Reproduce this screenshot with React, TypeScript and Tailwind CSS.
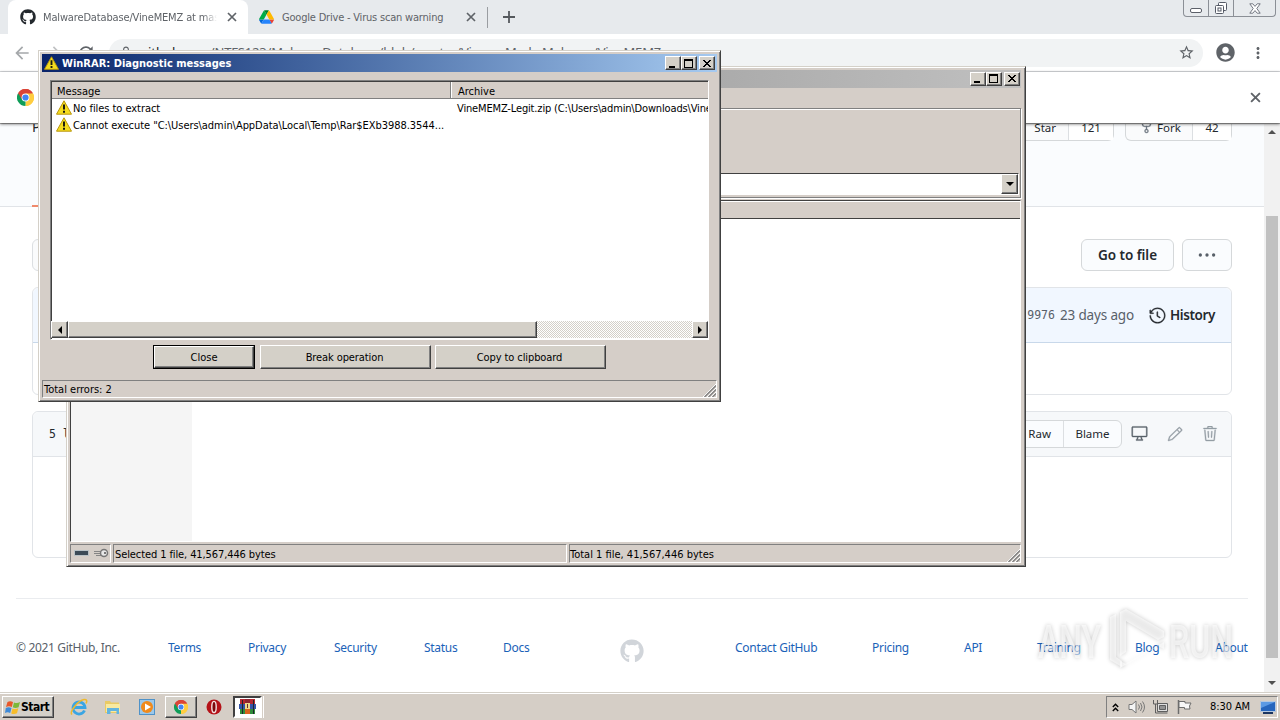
import { clsx } from "clsx";
import React from "react";
import { FaGithub, FaUserCircle } from "react-icons/fa";
import {
  GoDeviceDesktop,
  GoHistory,
  GoKebabHorizontal,
  GoPencil,
  GoRepoForked,
  GoTrash,
} from "react-icons/go";
import { MdArrowBack, MdArrowForward, MdLockOutline, MdMoreVert, MdRefresh, MdStarBorder } from "react-icons/md";

const tahoma = "font-['DejaVu_Sans_Condensed','DejaVu_Sans',sans-serif] font-stretch-condensed";
const segoe = "font-['Noto_Sans',sans-serif]";

const raised =
  "border border-t-white border-l-white border-r-[#404040] border-b-[#404040] bg-[#d4d0c8] shadow-[inset_-1px_-1px_0_#808080]";
const sunken = "border border-t-[#808080] border-l-[#808080] border-r-white border-b-white";
const frame =
  "border border-t-[#d4d0c8] border-l-[#d4d0c8] border-r-[#404040] border-b-[#404040] bg-[#d5cec8] shadow-[inset_1px_1px_0_#ffffff,inset_-1px_-1px_0_#808080]";

const footerLinks = [
  { label: "© 2021 GitHub, Inc.", className: "w-[152px] text-[#586069] tracking-[-0.34px]" },
  { label: "Terms", className: "w-20" },
  { label: "Privacy", className: "w-[86px]" },
  { label: "Security", className: "w-[90px]" },
  { label: "Status", className: "w-[79px]" },
  { label: "Docs", className: "w-[117px]" },
];

const footerLinksRight = [
  { label: "Contact GitHub", className: "w-[137px]" },
  { label: "Pricing", className: "w-[92px]" },
  { label: "API", className: "w-[73px]" },
  { label: "Training", className: "w-[98px]" },
  { label: "Blog", className: "w-20" },
  { label: "About", className: "w-[33px]" },
];

function CloseIcon({ size }: { size: number }) {
  return (
    <svg width={size} height={size} viewBox="0 0 10 10" className="shrink-0">
      <path d="M1 1 9 9M9 1 1 9" stroke="#5f6368" strokeWidth="1.700" />
    </svg>
  );
}

function ChromeLogo({ size }: { size: number }) {
  return (
    <svg width={size} height={size} viewBox="0 0 48 48">
      <path d="M24 24 3.2 12A24 24 0 0 1 44.8 12Z" fill="#db4437" />
      <path d="M24 24 44.8 12A24 24 0 0 1 24 48Z" fill="#ffcd40" />
      <path d="M24 24 24 48A24 24 0 0 1 3.2 12Z" fill="#0f9d58" />
      <path d="M24 13H45.3A24 24 0 0 0 3.2 12L14.5 30Z" fill="#db4437" />
      <path d="M33.5 29.5 24 48A24 24 0 0 0 45.3 13H24Z" fill="#ffcd40" />
      <circle cx="24" cy="24" r="11" fill="#fff" />
      <circle cx="24" cy="24" r="8.8" fill="#4285f4" />
    </svg>
  );
}

function DriveLogo() {
  return (
    <svg width="15" height="14" viewBox="0 0 87 78" className="shrink-0">
      <path d="M6.6 66.9 10.4 73.5c.8 1.4 2 2.5 3.3 3.3L27.5 53H0c0 1.6.4 3.1 1.2 4.5Z" fill="#0066da" />
      <path d="M43.6 25 29.9 1.2c-1.3.8-2.5 1.9-3.3 3.3L1.2 48.5A9 9 0 0 0 0 53h27.5Z" fill="#00ac47" />
      <path d="M73.5 76.8c1.4-.8 2.5-1.9 3.3-3.3l9.3-16c.8-1.4 1.2-2.9 1.2-4.5H59.8l5.8 11.5Z" fill="#ea4335" />
      <path d="M43.6 25 57.4 1.2C56 .4 54.5 0 52.9 0H34.4c-1.6 0-3.2.4-4.5 1.2Z" fill="#00832d" />
      <path d="M59.8 53H27.5L13.7 76.8c1.4.8 2.9 1.2 4.5 1.2h50.8c1.6 0 3.2-.4 4.5-1.2Z" fill="#2684fc" />
      <path d="M73.4 26.5 60.7 4.5c-.8-1.4-1.9-2.5-3.3-3.3L43.6 25l16.2 28h27.4c0-1.6-.4-3.1-1.2-4.5Z" fill="#ffba00" />
    </svg>
  );
}

function WarningIcon({ size }: { size: number }) {
  return (
    <svg width={size} height={size} viewBox="0 0 16 16" className="shrink-0">
      <path d="M8 .8 15.5 14.2H.5Z" fill="#f5dc1e" stroke="#b8960c" strokeWidth="1" strokeLinejoin="round" />
      <path d="M7 4.6h2v5H7zM7 10.700h2v2H7z" fill="#1c1c10" />
    </svg>
  );
}

function CaptionButton({ kind }: { kind: "min" | "max" | "close" }) {
  return (
    <span className={clsx("flex h-[14px] w-4 items-center justify-center", raised)}>
      <svg width="12" height="11" viewBox="0 0 12 11" shapeRendering="crispEdges">
        {kind === "min" && <path d="M2 8h6v2H2z" fill="#000" />}
        {kind === "max" && <path d="M1 1h9v9H1zM2 3v6h7V3z" fill="#000" fillRule="evenodd" />}
        {kind === "close" && (
          <path
            d="M2 2h2v1h1v1h2V3h1V2h2v1H9v1H8v1H7v1h1v1h1v1h1v1H8V8H7V7H5v1H4v1H2V8h1V7h1V6h1V5H4V4H3V3H2z"
            fill="#000"
          />
        )}
      </svg>
    </span>
  );
}

function CaptionButtons() {
  return (
    <div className="flex">
      <CaptionButton kind="min" />
      <CaptionButton kind="max" />
      <span className="w-[2px]" />
      <CaptionButton kind="close" />
    </div>
  );
}

function SizeGrip() {
  return (
    <svg width="13" height="13" viewBox="0 0 13 13" className="self-end">
      <path d="M0 13 13 0M4 13 13 4M8 13 13 8" stroke="#fff" strokeWidth="1" />
      <path d="M1.5 13 13 1.5M5.500 13 13 5.500M9.500 13 13 9.500" stroke="#808080" strokeWidth="1.300" />
    </svg>
  );
}

function TabStrip() {
  return (
    <div className="flex h-[34px] bg-[#e7eaed] pl-2 text-[#5f6368]">
      <div className="flex w-60 items-center rounded-t-lg bg-white pl-3">
        <FaGithub className="h-4 w-4 shrink-0 text-[#24292e]" />
        <span
          className={clsx(
            "mr-[10px] ml-[7px] w-[174px] overflow-hidden pt-[1px] text-[11px] leading-[18px] tracking-[-0.15px] whitespace-nowrap [mask-image:linear-gradient(to_right,black_92%,transparent)]",
            tahoma,
          )}
        >
          MalwareDatabase/VineMEMZ at master
        </span>
        <CloseIcon size={10} />
      </div>
      <div className="flex w-60 items-center border-r border-[#9a9da1] pl-[11px] [border-image:linear-gradient(transparent_8px,#9a9da1_8px,#9a9da1_27px,transparent_27px)_1]">
        <DriveLogo />
        <span
          className={clsx(
            "mr-[2px] ml-2 w-[182px] pt-[1px] text-[11px] leading-[18px] tracking-[-0.2px] whitespace-nowrap",
            tahoma,
          )}
        >
          Google Drive - Virus scan warning
        </span>
        <CloseIcon size={10} />
      </div>
      <svg width="12" height="12" viewBox="0 0 12 12" className="mt-[11px] ml-[15px]">
        <path d="M6 0v12M0 6h12" stroke="#55595d" strokeWidth="1.800" />
      </svg>
      <div className="mr-1 ml-auto flex h-[17px] rounded-b-[4px] border border-t-0 border-[#8b8f96]">
        <span className="flex w-[25px] items-center justify-center border-r border-[#8b8f96]">
          <span className="mt-1 h-[5px] w-3 rounded-[2px] border border-[#5c6069] bg-white" />
        </span>
        <span className="flex w-[25px] items-center justify-center border-r border-[#8b8f96]">
          <svg width="14" height="14" viewBox="0 0 14 14" fill="#fff" stroke="#555a66">
            <rect x="4.500" y="1.500" width="8" height="8" rx="1" />
            <rect x="1.500" y="4.500" width="8" height="8" rx="1" />
            <rect x="4" y="7" width="3" height="3" />
          </svg>
        </span>
        <span className="flex w-[41px] items-center justify-center">
          <svg width="12" height="11" viewBox="0 0 12 11">
            <path
              d="M.8.8h3L6 3.400 8.200.8h3L7.800 5.500 11.200 10.200h-3L6 7.600 3.800 10.200h-3L4.200 5.500Z"
              fill="#fff"
              stroke="#666b76"
              strokeWidth=".9"
            />
          </svg>
        </span>
      </div>
    </div>
  );
}

function Toolbar() {
  return (
    <div className="flex h-[38px] items-center border-b border-[#d9dbde] bg-white text-[#5f6368]">
      <MdArrowBack className="ml-3 h-5 w-5 text-[#a5a8ab]" />
      <MdArrowForward className="ml-3 h-5 w-5 text-[#c0c2c4]" />
      <MdRefresh className="ml-[12px] h-5 w-5" />
      <div className="ml-[13px] flex h-7 w-[1094px] items-center rounded-full bg-[#f1f3f4] pl-[10px]">
        <MdLockOutline className="h-[14px] w-[14px]" />
        <span className="ml-[7px] text-[13px] whitespace-nowrap text-[#5f6368]">
          <span className="text-[#202124]">github.com</span>
          <span className="tracking-[-0.18px]">/NTFS123/MalwareDatabase/blob/master/Viewer-Made Malware/VineMEMZ</span>
        </span>
        <MdStarBorder className="mr-[8px] ml-auto h-[17px] w-[17px]" />
      </div>
      <FaUserCircle className="ml-[13px] h-[19px] w-[19px]" />
      <MdMoreVert className="ml-[14px] h-[18px] w-[18px]" />
    </div>
  );
}

function GitHubPage() {
  return (
    <div className="flex h-[568px] w-[1264px] flex-col overflow-hidden bg-white text-[#24292e]">
      <div className="flex h-[83px] shrink-0 justify-between border-b border-[#e1e4e8] bg-[#fafcfe] px-8">
        <div className="flex h-[83px] w-[60px] flex-col justify-between border-b-2 border-[#f08a6c]">
          <span className="-mt-[8px] text-[14px]">Pu</span>
        </div>
        <div className="flex h-[17px] gap-[11px] text-[11.500px]">
          <div className="flex w-[125px] rounded-b-md border border-t-0 border-[#d5d8da] bg-[#fafbfc]">
            <span className="flex w-[79px] items-end justify-end border-r border-[#dcdfe2] pr-3 leading-[25px]">Star</span>
            <span className="flex flex-1 items-end justify-center bg-white leading-[25px]">121</span>
          </div>
          <div className="flex w-[107px] rounded-b-md border border-t-0 border-[#d5d8da] bg-[#fafbfc]">
            <span className="flex w-[67px] items-end border-r border-[#dcdfe2] pl-[13px] leading-[25px]">
              <GoRepoForked className="mr-[3px] mb-[6px] h-[15px] w-[15px] stroke-current stroke-[0.5] text-[#6a737d]" />
              Fork
            </span>
            <span className="flex flex-1 items-end justify-center bg-white leading-[25px]">42</span>
          </div>
        </div>
      </div>

      <div className="mx-8 mt-8 flex h-8 shrink-0 items-center gap-2 text-[14px] font-semibold">
        <span className="h-8 w-24 rounded-md border border-[#dcdfe2] bg-[#fafbfc]" />
        <span className="ml-auto flex h-8 w-[93px] items-center justify-center rounded-md border border-[#d5d8da] bg-[#fafcfe] text-[13.500px] tracking-[-0.05px]">
          Go to file
        </span>
        <span className="flex h-8 w-[50px] items-center justify-center rounded-md border border-[#d5d8da] bg-[#fafcfe] text-[#586069]">
          <GoKebabHorizontal className="h-5 w-5" />
        </span>
      </div>

      <div className="mx-8 mt-4 h-[108px] shrink-0 rounded-md border border-[#e1e4e8]">
        <div className="flex h-[55px] items-center justify-end rounded-t-md border-b border-[#c8d8ea] bg-[#f1f7ff] pr-4 text-[13.500px]">
          <span className="mr-[5px] pt-[1px] font-['DejaVu_Sans_Mono'] text-[11.500px] text-[#586069]">9976</span>
          <span className="mr-[15px] tracking-[-0.15px] text-[#586069]">23 days ago</span>
          <GoHistory className="mr-1 h-[17px] w-[17px] stroke-current stroke-[0.5]" />
          <span className="w-[45px] font-semibold tracking-[-0.4px]">History</span>
        </div>
      </div>

      <div className="mx-8 mt-4 h-[147px] shrink-0 rounded-md border border-[#e1e4e8]">
        <div className="flex h-[45px] items-center rounded-t-md border-b border-[#e1e4e8] bg-[#f6f8fa] pr-3 pl-4 text-[11.500px]">
          <span className="pt-[2px] font-['DejaVu_Sans_Mono'] text-[11.500px]">5 lines (4 sloc)</span>
          <div className="mr-[9px] ml-auto flex h-7 items-center rounded-md border border-[#d5d8da] bg-[#fafcfe]">
            <span className="px-3">Raw</span>
            <span className="flex h-full w-[58px] items-center justify-center border-l border-[#dcdfe2]">Blame</span>
          </div>
          <div className="flex items-center gap-[19px] pr-[1px] pb-[1px]">
            <GoDeviceDesktop className="h-[17px] w-[17px] stroke-current stroke-[0.5] text-[#586069]" />
            <GoPencil className="h-4 w-4 stroke-current stroke-[0.5] text-[#959da5]" />
            <GoTrash className="h-4 w-4 stroke-current stroke-[0.5] text-[#959da5]" />
          </div>
        </div>
      </div>

      <div className="mx-4 mt-[40px] flex h-[98px] shrink-0 items-center border-t border-[#eaecef] text-[12px] tracking-[-0.29px] whitespace-nowrap text-[#1a62b8]">
        {footerLinks.map((link) => (
          <span key={link.label} className={clsx("shrink-0", link.className)}>
            {link.label}
          </span>
        ))}
        <FaGithub className="mt-[6px] mr-[91px] h-6 w-6 shrink-0 text-[#d1d5da]" />
        {footerLinksRight.map((link) => (
          <span key={link.label} className={clsx("shrink-0", link.className)}>
            {link.label}
          </span>
        ))}
      </div>
    </div>
  );
}

function Browser() {
  return (
    <div className={clsx("h-[692px] bg-white", segoe)}>
      <TabStrip />
      <Toolbar />
      <div className="relative flex h-[51px] items-center justify-between bg-white pr-[19px] pl-[17px] shadow-[0_1px_3px_rgba(0,0,0,0.6)]">
        <ChromeLogo size={17} />
        <CloseIcon size={11} />
      </div>
      <div className="flex border-t border-[#b8b8b8]">
        <GitHubPage />
        <div className="flex w-4 flex-col items-center bg-[#f1f1f1]">
          <span className="mt-[6px] border-x-4 border-b-4 border-x-transparent border-b-[#505050]" />
          <span className="mt-[82px] h-[442px] w-3 bg-[#c1c1c1]" />
          <span className="mt-[23px] border-x-4 border-t-4 border-x-transparent border-t-[#505050]" />
        </div>
      </div>
    </div>
  );
}

function ArchiveWindow() {
  return (
    <div className={clsx("absolute top-[66px] left-[66px] flex h-[501px] w-[960px] flex-col p-[3px] pr-1 text-[11px]", frame)}>
      <div className="flex h-[18px] items-center justify-end bg-linear-to-r from-[#808080] to-[#c0c0c0] pr-[1px]">
        <CaptionButtons />
      </div>
      <div className="mt-5 flex h-[90px] flex-col justify-end border border-[#808080] border-l-white pr-[1px] shadow-[inset_0_1px_0_#ffffff,1px_1px_0_#ffffff]">
        <div className="mb-[2px] flex h-[22px] justify-end border border-t-[#404040] border-r-white border-b-white border-l-[#404040] bg-white">
          <span className={clsx("flex w-[17px] items-center justify-center", raised)}>
            <span className="border-x-4 border-t-4 border-x-transparent border-t-black" />
          </span>
        </div>
      </div>
      <div className="mt-[2px] flex h-[343px] flex-col border border-t-[#404040] border-r-white border-b-white border-l-[#404040] bg-white">
        <div className="h-[18px] border-t border-b border-t-white border-b-[#404040] bg-[#d5cec8]" />
        <div className="w-[121px] flex-1 bg-[#f5f5f5]" />
      </div>
      <div className="mt-[2px] flex h-[19px] shrink-0 gap-[2px] leading-[19px]">
        <div className={clsx("flex w-[41px] items-center gap-1 pl-[3px]", sunken)}>
          <span className="h-[6px] w-[15px] border border-[#b9c2c6] bg-[#3c4b57]" />
          <svg width="16" height="10" viewBox="0 0 16 10" fill="none">
            <path d="M1 3.500h7M1 5.500h7M3 7.500h5" stroke="#858585" />
            <circle cx="11" cy="5" r="3.500" fill="#e8e8e8" stroke="#777" strokeWidth="1.500" />
            <circle cx="12" cy="5" r="1" fill="#555" />
          </svg>
        </div>
        <div className={clsx("w-[454px] pl-[1px] tracking-[-0.1px]", sunken)}>Selected 1 file, 41,567,446 bytes</div>
        <div className={clsx("flex flex-1 justify-between", sunken)}>
          Total 1 file, 41,567,446 bytes
          <SizeGrip />
        </div>
      </div>
    </div>
  );
}

const messages = [
  { text: "No files to extract", archive: "VineMEMZ-Legit.zip (C:\\Users\\admin\\Downloads\\VineMEMZ-Legit.zip)" },
  { text: 'Cannot execute "C:\\Users\\admin\\AppData\\Local\\Temp\\Rar$EXb3988.3544...', archive: "" },
];

function DiagnosticDialog() {
  return (
    <div className={clsx("absolute top-[50px] left-[38px] flex h-[352px] w-[683px] flex-col p-[3px] text-[11px]", frame)}>
      <div className="flex h-[18px] items-center bg-linear-to-r from-[#0a246a] to-[#a6caf0] pr-[2px] pl-[2px] text-white">
        <WarningIcon size={15} />
        <span className="ml-[3px] flex-1 pt-[2px] font-bold">WinRAR: Diagnostic messages</span>
        <CaptionButtons />
      </div>

      <div className="mx-2 mt-2 flex h-[260px] flex-col border border-t-[#808080] border-r-white border-b-white border-l-[#808080] bg-white shadow-[inset_1px_1px_0_#404040]">
        <div className="mt-[1px] ml-[1px] flex h-[17px] shrink-0 border-b border-[#808080] bg-[#d5cec8] leading-[19px]">
          <span className="w-[399px] border-r border-[#808080] pl-[5px] shadow-[1px_0_0_#ffffff]">Message</span>
          <span className="pl-[7px]">Archive</span>
        </div>
        <div className="flex-1 overflow-hidden">
          {messages.map((message) => (
            <div key={message.text} className="flex h-[17px] items-center pl-[5px] leading-[17px] whitespace-nowrap">
              <WarningIcon size={16} />
              <span className="ml-[1px] w-[384px] shrink-0 pt-[1px] tracking-[-0.05px]">{message.text}</span>
              <span className="pt-[1px] tracking-[-0.15px]">{message.archive}</span>
            </div>
          ))}
        </div>
        <div className="mb-[1px] flex h-[17px] bg-[repeating-conic-gradient(#ffffff_0_25%,#d4d0c8_0_50%)] bg-[length:2px_2px]">
          <span className={clsx("flex w-[17px] items-center justify-center", raised)}>
            <span className="border-y-4 border-r-4 border-y-transparent border-r-black" />
          </span>
          <span className={clsx("w-[469px]", raised)} />
          <span className={clsx("ml-auto flex w-4 items-center justify-center", raised)}>
            <span className="border-y-4 border-l-4 border-y-transparent border-l-black" />
          </span>
        </div>
      </div>

      <div className="mt-[5px] flex h-6 pl-[111px]">
        <button type="button" className="w-[102px] border border-black">
          <span className={clsx("flex h-full items-center justify-center pt-[2px]", raised)}>Close</span>
        </button>
        <button type="button" className={clsx("ml-[5px] w-[171px] pt-[2px] pr-[2px] tracking-[-0.1px]", raised)}>
          Break operation
        </button>
        <button type="button" className={clsx("ml-1 w-[171px] pt-[2px] pr-[2px] tracking-[-0.1px]", raised)}>
          Copy to clipboard
        </button>
      </div>

      <div className={clsx("mt-[11px] flex h-[18px] justify-between pl-[1px] leading-[17px]", sunken)}>
        Total errors: 2
        <SizeGrip />
      </div>
    </div>
  );
}

function Watermark() {
  return (
    <div className="pointer-events-none absolute top-[607px] left-[1036px] drop-shadow-[0_0_2px_rgba(0,0,0,0.35)]">
      <svg width="202" height="68" viewBox="0 0 202 68" fill="#ffffff" fillOpacity="0.6">
        <text x="2" y="51" fontFamily="Roboto, sans-serif" fontSize="46" fontWeight="500" textLength="63" lengthAdjust="spacingAndGlyphs">
          ANY
        </text>
        <text x="133" y="51" fontFamily="Roboto, sans-serif" fontSize="46" fontWeight="500" textLength="64" lengthAdjust="spacingAndGlyphs">
          RUN
        </text>
        <path d="M74 10 80 7V50L86 54V60L74 53Z" />
        <path d="M84 5 90 2 128 24V30L122 33 90 14V45L84 49Z" />
        <path d="M84 61 122 39 128 42V35L90 57 84 54Z" />
      </svg>
    </div>
  );
}

function Taskbar() {
  return (
    <div
      className={clsx(
        "relative flex h-7 items-center border-t border-[#d4d0c8] bg-[#d5cec6] pt-[1px] pl-[2px] text-[11px] shadow-[inset_0_1px_0_#ffffff]",
        tahoma,
      )}
    >
      <button type="button" className={clsx("flex h-[22px] w-[52px] items-center pl-[2px] text-[12px] font-bold tracking-[-0.5px]", raised)}>
        <svg width="16" height="15" viewBox="0 0 16 15" className="shrink-0">
          <path d="M2.500 2Q5 .3 8 2L6.800 7Q4 5.500 1 7Z" fill="#e8572a" />
          <path d="M9 2.400Q12 3.800 15 2L13.600 7.200Q10.500 8.500 7.800 7.300Z" fill="#7cb83a" />
          <path d="M.8 8Q3.500 6.600 6.500 8L5.200 13Q2.500 11.600 0 13Z" fill="#3e8ad8" />
          <path d="M7.500 8.400Q10.300 9.600 13.300 8.300L12 13.300Q9 14.800 6.200 13.400Z" fill="#f7bd2a" />
        </svg>
        Start
      </button>
      <svg width="18" height="18" viewBox="0 0 18 18" className="ml-4" fill="none">
        <path d="M14.500 12.500A6 6 0 1 1 15 9.500H4" stroke="#3aa5e3" strokeWidth="2.800" />
        <path d="M2 16.500C-1 14 8 2.500 14 1.500c3-.3 3.300 1.500 2 4" stroke="#efb92c" strokeWidth="1.500" />
      </svg>
      <svg width="17" height="16" viewBox="0 0 17 16" className="ml-4">
        <path d="M1 2h5l1 1.500h8V14H1Z" fill="#e9ca65" />
        <path d="M2 5h14v8H2Z" fill="#f8e9a0" />
        <path d="M3 9h12v6h-2.500v-3h-6v3H3Z" fill="#62b4df" />
      </svg>
      <svg width="16" height="16" viewBox="0 0 16 16" className="ml-[18px]">
        <rect x=".5" y=".5" width="15" height="15" fill="#9cc8ea" stroke="#4f92c8" />
        <circle cx="8" cy="8" r="6" fill="#f08a1c" />
        <path d="m6 4.500 6 3.500-6 3.500Z" fill="#fff" />
      </svg>
      <span className={clsx("ml-[10px] flex h-[22px] w-8 items-center justify-center", raised)}>
        <ChromeLogo size={14} />
      </span>
      <svg width="16" height="16" viewBox="0 0 16 16" className="ml-[9px]">
        <circle cx="8" cy="8" r="7.500" fill="#b51218" />
        <ellipse cx="8" cy="8" rx="2.200" ry="5.600" fill="#7c070b" stroke="#f4e3e3" strokeWidth="1.400" />
      </svg>
      <span className="ml-[11px] flex h-[22px] w-[29px] items-center justify-center border-2 border-t-[#404040] border-r-white border-b-white border-l-[#404040] bg-white">
        <svg width="17" height="16" viewBox="0 0 17 16" shapeRendering="crispEdges">
          <path d="M1 0h15v5H1z" fill="#b52830" />
          <path d="M0 5h17v5H0z" fill="#3554a8" />
          <path d="M1 10h15v5H1z" fill="#2f8c3a" />
          <path d="M6 0h5v5H6z" fill="#8c2430" />
          <path d="M6 10h5v5H6z" fill="#d8641e" />
          <path d="M6 4h5v6H6z" fill="#ecd98a" />
          <path d="M8 5h1v4H8z" fill="#6c2a2a" />
          <path d="M3 1v14M14 1v14" stroke="#20242c" strokeWidth="1" />
        </svg>
      </span>
      <span className="ml-[1px] h-[22px] border-r border-white" />

      <div className={clsx("mr-[2px] ml-auto flex h-[22px] w-[172px] items-center pr-[1px] pl-[5px]", sunken)}>
        <svg width="7" height="9" viewBox="0 0 7 9" fill="none" stroke="#000" strokeWidth="1.400">
          <path d="M.8 4 3.500 1.300 6.200 4M.8 8 3.500 5.300 6.200 8" />
        </svg>
        <svg width="17" height="16" viewBox="0 0 17 16" className="ml-[9px]" stroke="#777">
          <path d="M1 5.500h3L8 2v12L4 10.500H1Z" fill="#f4f4f4" />
          <path d="M10.500 5.500q2 2.500 0 5M12.500 4q3 4 0 8M14.500 2.500q4 5.500 0 11" fill="none" />
        </svg>
        <svg width="17" height="16" viewBox="0 0 17 16" className="ml-[7px]" stroke="#5f5f5f">
          <path d="M5.500 4.500h10v8h-10z" fill="#dedede" />
          <path d="M7.500 6.500h6v4h-6z" fill="#929292" />
          <path d="M1.500 1v4h4V1M3.500 5v9h12" fill="none" />
        </svg>
        <svg width="17" height="16" viewBox="0 0 17 16" className="ml-[7px]" stroke="#6c6c6c">
          <path d="M2.500 1v14" strokeWidth="1.500" />
          <path d="M3 2.500h6v1.500h6L13.500 7l.5 3H8.500V8.500H3Z" fill="#f7f7f7" />
        </svg>
        <span className="ml-auto pt-[1px] tracking-[-0.1px] whitespace-nowrap">8:30 AM</span>
        <svg width="16" height="14" viewBox="0 0 16 14" className="ml-[10px]">
          <path d="M.5 1.500h15v10H.5Z" fill="#2766bd" stroke="#b5c8df" />
          <path d="M1 2h14L1 8Z" fill="#5c9ae4" />
          <path d="M3 13h10" stroke="#1b3561" strokeWidth="2" />
        </svg>
      </div>
    </div>
  );
}

export default function App() {
  return (
    <div className="relative h-[720px] w-[1280px] overflow-hidden bg-white text-black">
      <Browser />
      <div className={tahoma}>
        <ArchiveWindow />
        <DiagnosticDialog />
      </div>
      <Watermark />
      <Taskbar />
    </div>
  );
}
